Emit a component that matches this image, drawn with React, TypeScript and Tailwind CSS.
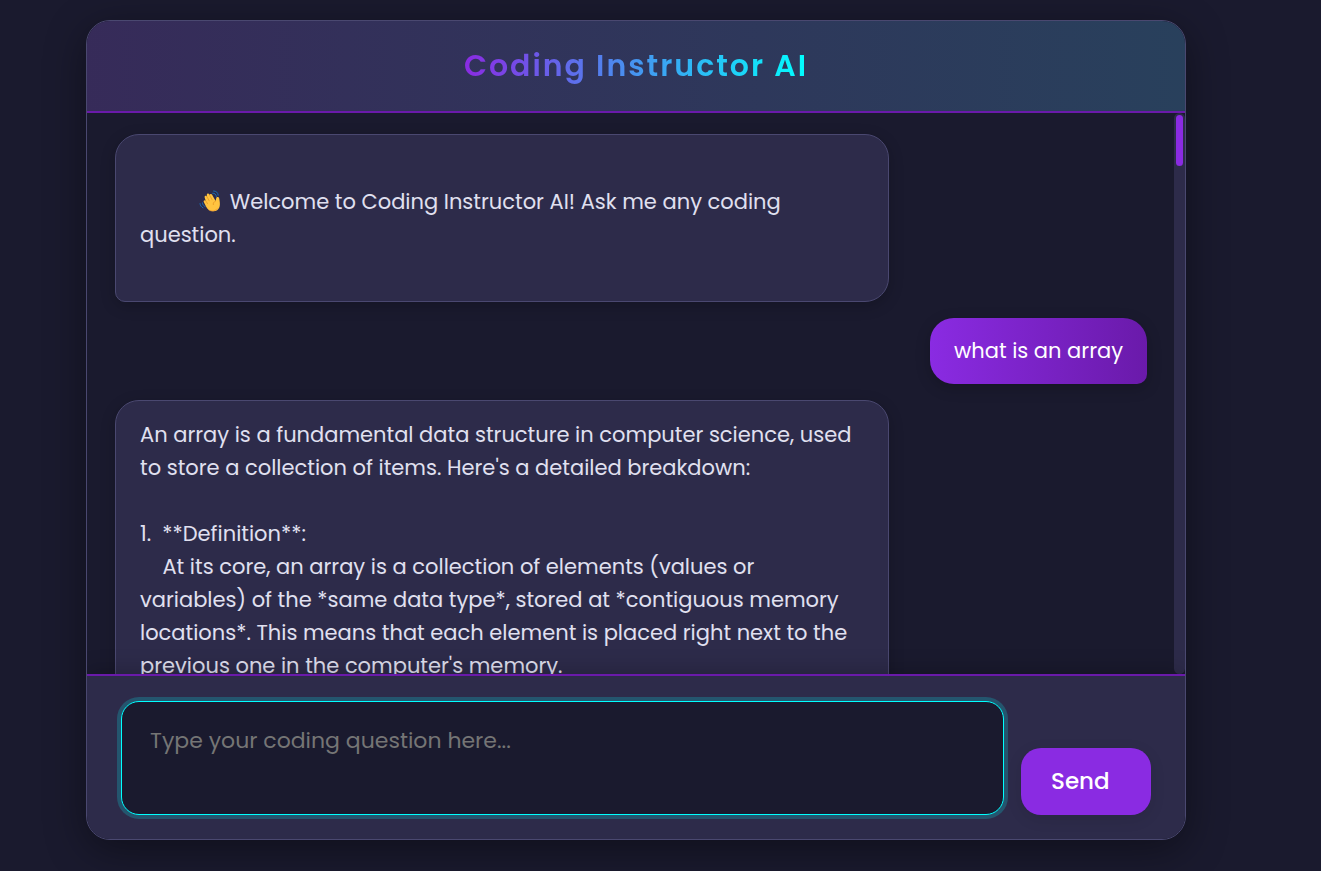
import { useState, type ReactNode } from "react";

function WavingHand() {
  return (
    <svg viewBox="0 0 22 22" className="mx-[3px] inline-block size-[22px] align-[-3px]" role="img" aria-label="Waving hand">
      <g fill="none" stroke="#1b6bb0" strokeWidth="1" strokeLinecap="round">
        <path d="M13.600 3.200c2.200-.1 3.600 1.100 3.800 3.300" />
        <path d="M14.600 1c2.700 0 4.400 1.600 4.600 4.200" />
        <path d="M3.400 12.800c.2 1.900 1.100 3.100 2.700 3.700" />
        <path d="M1 13.600c.2 2 1.200 3.400 3 4.200" />
      </g>
      <path
        d="M7 16.400 4.800 12c-.7-1.500 1-2.400 1.900-1.200L5.600 7.200c-.4-1.500 1.600-2.200 2.200-.8L7.800 5c-.2-1.700 1.800-2.200 2.500-.7l.5 1c0-1.400 1.700-1.800 2.300-.5l3.500 6.200.7-3c.4-1.700 2.900-1.300 2.900.5.600 2.900 1.100 6.200.3 8.500-1 3-3.600 4.500-6.700 4.200-3.200-.2-5.200-2-6.800-4.800Z"
        fill="#ffc440"
      />
      <path
        d="m7.800 6.400 2.400 4.400M10.600 5l2.500 4.800M6.700 10.800l1.900 3M16.600 11c-1.800.9-2.500 2-2.300 3.600"
        fill="none"
        stroke="#e08a1a"
        strokeWidth=".6"
        strokeLinecap="round"
      />
      <path d="M9 19.400c3 2 7.800 1.500 10-2.200-.9 2.900-3.100 4.200-5.800 4-1.700-.1-3.100-.7-4.200-1.800Z" fill="#f59f30" />
    </svg>
  );
}

function BotMessage({ children }: { children: ReactNode }) {
  return (
    <div className="w-3/4 shrink-0 self-start whitespace-pre-wrap rounded-[24px] rounded-bl-[10px] border border-[#4a4870] bg-[#2d2b4a] px-6 py-[17px] text-[#e0e0f0] shadow-[0_4px_15px_rgba(0,0,0,0.2)]">
      {children}
    </div>
  );
}

function UserMessage({ children }: { children: ReactNode }) {
  return (
    <div className="max-w-3/4 shrink-0 self-end rounded-[24px] rounded-br-[10px] bg-linear-to-r/srgb from-[#8a2be2] to-[#6a1aaa] px-6 py-4 leading-[34px] text-white shadow-[0_4px_15px_rgba(0,0,0,0.2)]">
      {children}
    </div>
  );
}

const welcome = " Welcome to Coding Instructor AI! Ask me any coding question.\n\n";

const answer = `An array is a fundamental data structure in computer science, used to store a collection of items. Here's a detailed breakdown:

1.  **Definition**:
    At its core, an array is a collection of elements (values or variables) of the *same data type*, stored at *contiguous memory locations*. This means that each element is placed right next to the previous one in the computer's memory.`;

export default function App() {
  const [draft, setDraft] = useState("");

  return (
    <div className="flex h-screen flex-col bg-[#1a1a2e] pt-5 pr-[135px] pb-[31px] pl-[86px] font-[Poppins,Inter,sans-serif]">
      <main className="flex min-h-0 flex-1 flex-col overflow-hidden rounded-[24px] border border-[#4a4870] bg-[#1a1a2e] shadow-[0_10px_40px_rgba(0,0,0,0.4)]">
        <header className="flex h-[92px] shrink-0 items-center justify-center border-b-2 border-[#6a1aaa] bg-[#2d2b4a] bg-linear-to-r/srgb from-[#8a2be2]/10 to-[#00ffff]/10">
          <h1 className="bg-linear-to-r/srgb from-[#8a2be2] to-[#00ffff] bg-clip-text text-[30px] leading-[48px] font-semibold tracking-[2px] text-transparent">
            Coding Instructor AI
          </h1>
        </header>

        <div className="flex min-h-0 flex-1">
          <section
            aria-label="Conversation"
            className="flex min-w-0 flex-1 flex-col gap-4 overflow-y-auto pt-[21px] pr-[27px] pl-7 text-[21px] leading-[33px] [scrollbar-width:none]"
          >
            <BotMessage>
              {"\n          "}
              <WavingHand />
              {welcome}
            </BotMessage>
            <UserMessage>what is an array</UserMessage>
            <BotMessage>{answer}</BotMessage>
          </section>
          <div className="w-[11px] shrink-0 rounded-[10px] bg-[#2d2b4a] p-0.5" aria-hidden="true">
            <div className="h-[51px] rounded-full bg-[#8a2be2]" />
          </div>
        </div>

        <form
          className="relative flex shrink-0 items-end gap-[17px] border-t-2 border-[#6a1aaa] bg-[#2d2b4a] px-[34px] pt-[25px] pb-6 shadow-[0_-4px_20px_rgba(0,0,0,0.2)]"
          onSubmit={(event) => event.preventDefault()}
        >
          <textarea
            aria-label="Your question"
            placeholder="Type your coding question here..."
            value={draft}
            onChange={(event) => setDraft(event.target.value)}
            className="h-[114px] min-w-0 flex-1 resize-none rounded-[18px] border border-[#00ffff] bg-[#1a1a2e] px-7 py-[22px] text-[22px] leading-[33px] text-[#e0e0f0] ring-4 ring-[#00ffff]/20 outline-none placeholder:text-[#757575]"
          />
          <button
            type="submit"
            className="h-[67px] w-[130px] rounded-[20px] bg-[#8a2be2] pl-[30px] text-left text-[23px] leading-[33px] font-medium text-white shadow-[0_4px_15px_rgba(0,0,0,0.1)]"
          >
            Send
          </button>
        </form>
      </main>
    </div>
  );
}
